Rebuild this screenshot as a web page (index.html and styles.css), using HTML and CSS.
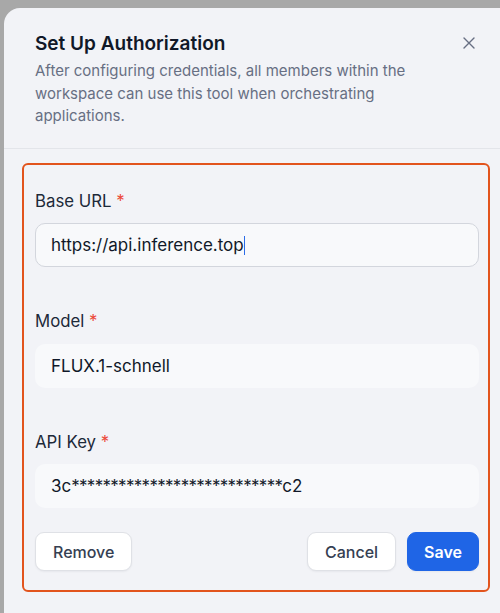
FILE: index.html
```html
<!DOCTYPE html>
<html lang="en">
<head>
<meta charset="utf-8">
<title>Set Up Authorization</title>
<link rel="stylesheet" href="styles.css">
</head>
<body>
<div class="modal">
  <div class="header">
    <h1 class="title">Set Up Authorization</h1>
    <p class="desc">After configuring credentials, all members within the workspace can use this tool when orchestrating applications.</p>
    <button class="close" aria-label="Close">
      <svg width="12" height="12" viewBox="0 0 12 12"><path d="M1 1 L11 11 M11 1 L1 11" stroke="#676f83" stroke-width="1.4" stroke-linecap="round" fill="none"/></svg>
    </button>
  </div>
  <div class="form">
    <div class="field">
      <div class="label">Base URL <span class="req">*</span></div>
      <div class="input focused">https://api.inference.top<span class="caret"></span></div>
    </div>
    <div class="field">
      <div class="label">Model <span class="req">*</span></div>
      <div class="input">FLUX.1-schnell</div>
    </div>
    <div class="field">
      <div class="label">API Key <span class="req">*</span></div>
      <div class="input">3c<span class="mask">***************************</span>c2</div>
    </div>
    <div class="actions">
      <button class="btn">Remove</button>
      <div class="right">
        <button class="btn">Cancel</button>
        <button class="btn primary">Save</button>
      </div>
    </div>
  </div>
</div>
</body>
</html>
```
FILE: styles.css
```css
* { box-sizing: border-box; }
html, body { margin: 0; padding: 0; }
body {
  width: 500px;
  height: 613px;
  overflow: hidden;
  background: #a8a8a8;
  font-family: Inter, "Noto Sans", sans-serif;
}
.modal {
  margin: 8px 0 0 4px;
  width: 496px;
  height: 605px;
  background: #f2f3f7;
  border-radius: 16px 0 0 0;
}
.header {
  position: relative;
  padding: 24px 20px 20px 31px;
  border-bottom: 1px solid #e3e5ea;
}
.title {
  margin: 0;
  font-size: 19px;
  line-height: 24px;
  font-weight: 600;
  color: #101828;
}
.desc {
  margin: 4px 0 0;
  max-width: 420px;
  font-size: 15px;
  line-height: 22.5px;
  color: #676f83;
}
.close {
  position: absolute;
  top: 29px;
  left: 459px;
  width: 12px;
  height: 12px;
  padding: 0;
  border: 0;
  background: none;
  display: flex;
}
.form {
  margin: 14px 0 0 18px;
  width: 468px;
  border: 2px solid #e2541d;
  border-radius: 6px;
  padding: 24px 9px 19px 11px;
  display: flex;
  flex-direction: column;
  gap: 42px;
}
.field { display: flex; flex-direction: column; gap: 10.5px; }
.label {
  font-size: 16.8px;
  line-height: 24px;
  color: #1d2939;
}
.req { color: #ec4a3b; }
.input {
  height: 44px;
  border-radius: 10px;
  background: #f8f9fb;
  padding: 0 16px;
  display: flex;
  align-items: center;
  font-size: 17px;
  color: #101828;
}
.input.focused {
  border: 1px solid #d3d6dd;
  padding: 0 15px;
}
.mask { letter-spacing: -0.7px; }
.caret {
  display: inline-block;
  width: 1.5px;
  height: 19px;
  background: #2b6ce8;
}
.actions {
  margin-top: -18px;
  display: flex;
  justify-content: space-between;
}
.right { display: flex; gap: 11px; }
.btn {
  height: 39px;
  padding: 0 17px;
  border: 1px solid #dfe1e6;
  border-radius: 9px;
  background: #ffffff;
  font-family: Inter, "Noto Sans", sans-serif;
  font-size: 16px;
  font-weight: 500;
  color: #354052;
  box-shadow: 0 1px 2px rgba(16, 24, 40, 0.05);
}
.btn.primary {
  padding: 0 16px;
  background: #1f65e6;
  border-color: #1f65e6;
  color: #ffffff;
  font-weight: 600;
}
```
